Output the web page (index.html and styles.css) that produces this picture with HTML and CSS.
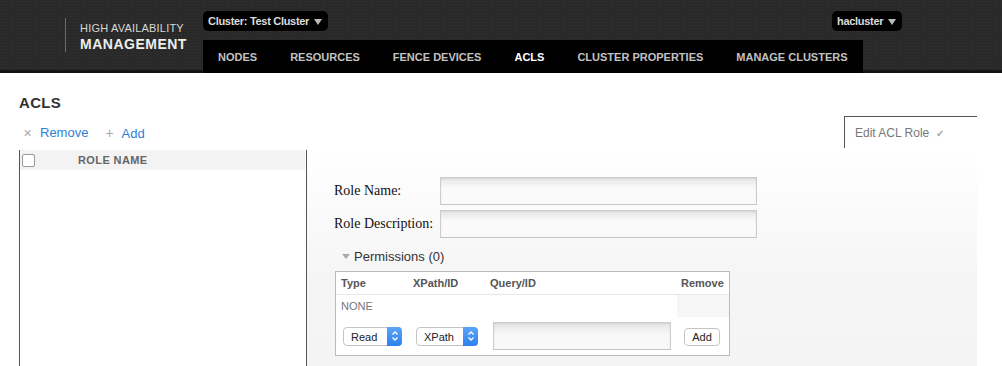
FILE: index.html
```html
<!DOCTYPE html>
<html lang="en">
<head>
    <meta charset="UTF-8">
    <title>High Availability Management - ACLs</title>
    <link rel="stylesheet" href="styles.css">
</head>
<body>
    <!-- top bar -->
    <header class="topbar">
        <div class="logo">
            <div class="logo-small">HIGH AVAILABILITY</div>
            <div class="logo-big">MANAGEMENT</div>
        </div>
        <div class="header-main">
            <div class="header-top">
                <div class="dropdown">Cluster: Test Cluster <span class="caret"></span></div>
                <div class="dropdown user">hacluster <span class="caret"></span></div>
            </div>
            <nav class="nav">
                <a>NODES</a>
                <a>RESOURCES</a>
                <a>FENCE DEVICES</a>
                <a class="active">ACLS</a>
                <a>CLUSTER PROPERTIES</a>
                <a>MANAGE CLUSTERS</a>
            </nav>
        </div>
    </header>

    <div class="page">
        <h1 class="page-title">ACLS</h1>

        <div class="toolbar">
            <div class="actions">
                <a class="action"><span class="action-icon">&#x2715;</span>Remove</a>
                <a class="action"><span class="action-icon plus">+</span>Add</a>
            </div>
            <div class="tab">Edit ACL Role <span class="check">&#x2714;</span></div>
        </div>

        <div class="panels">
            <div class="list-panel">
                <div class="list-head">
                    <span class="checkbox"></span>
                    <span class="list-title">ROLE NAME</span>
                </div>
            </div>

            <div class="edit-panel">
                <div class="form-row">
                    <label class="form-label">Role Name:</label>
                    <div class="text-input wide"></div>
                </div>
                <div class="form-row">
                    <label class="form-label">Role Description:</label>
                    <div class="text-input wide"></div>
                </div>

                <div class="perm-title"><span class="tri"></span>Permissions (0)</div>

                <div class="perm-table">
                    <div class="perm-row perm-head">
                        <div>Type</div>
                        <div>XPath/ID</div>
                        <div>Query/ID</div>
                        <div class="col-remove">Remove</div>
                    </div>
                    <div class="perm-row perm-empty">
                        <div>NONE</div>
                        <div></div>
                        <div></div>
                        <div class="shade"></div>
                    </div>
                    <div class="perm-row perm-new">
                        <div><div class="select sel-read">Read<span class="sel-arrow"><svg width="8" height="12" viewBox="0 0 8 12"><path d="M1.5 4.5 L4 2 L6.5 4.5 M1.5 7.5 L4 10 L6.5 7.5" fill="none" stroke="#fff" stroke-width="1.3"/></svg></span></div></div>
                        <div><div class="select sel-xpath">XPath<span class="sel-arrow"><svg width="8" height="12" viewBox="0 0 8 12"><path d="M1.5 4.5 L4 2 L6.5 4.5 M1.5 7.5 L4 10 L6.5 7.5" fill="none" stroke="#fff" stroke-width="1.3"/></svg></span></div></div>
                        <div><div class="text-input query"></div></div>
                        <div><button class="btn-add">Add</button></div>
                    </div>
                </div>
            </div>
        </div>
    </div>
</body>
</html>
```

FILE: styles.css
```css
body {
    margin: 0;
    font-family: "Liberation Sans", Arial, sans-serif;
    background: #fff;
    color: #333;
}

/* header */
.topbar {
    height: 73px;
    display: flex;
    background-color: #292929;
    background-image:
        linear-gradient(to bottom, transparent 70px, #141414 70px),
        radial-gradient(#333 0.8px, transparent 1px);
    background-size: 100% 100%, 3px 3px;
}
.logo {
    margin: 18px 0 0 65px;
    height: 34px;
    width: 138px;
    box-sizing: border-box;
    border-left: 1px solid #6a6a6a;
    padding-left: 14px;
}
.logo-small {
    font-size: 11px;
    color: #d8d8d8;
    letter-spacing: 0.2px;
    line-height: 12px;
    margin-top: 4px;
}
.logo-big {
    font-size: 14px;
    font-weight: bold;
    color: #eee;
    letter-spacing: 0.5px;
    line-height: 16px;
    margin-top: 2px;
}
.header-main {
    flex: 1;
    display: flex;
    flex-direction: column;
}
.header-top {
    display: flex;
    justify-content: space-between;
    padding: 11px 100px 0 0;
    height: 29px;
    box-sizing: border-box;
}
.dropdown {
    background: #000;
    border-radius: 5px;
    height: 20px;
    line-height: 20px;
    padding: 0 6px 0 5px;
    font-size: 11px;
    font-weight: bold;
    color: #dcdcdc;
    letter-spacing: -0.3px;
}
.caret {
    display: inline-block;
    width: 0;
    height: 0;
    border-left: 4px solid transparent;
    border-right: 4px solid transparent;
    border-top: 6px solid #bbb;
    margin-left: 2px;
    vertical-align: 0;
}
.nav {
    width: 660px;
    height: 33px;
    margin-top: 11px;
    background: #000;
    display: flex;
    align-items: center;
    gap: 33px;
    padding-left: 15px;
    box-sizing: border-box;
}
.nav a {
    font-size: 11px;
    font-weight: bold;
    color: #c2c2c2;
}
.nav a.active {
    color: #fff;
}

/* page */
.page {
    padding: 0 0 0 19px;
}
.page-title {
    margin: 0;
    padding-top: 21px;
    font-size: 15px;
    line-height: 18px;
    color: #333;
    letter-spacing: 0.3px;
}
.toolbar {
    display: flex;
    justify-content: space-between;
    align-items: flex-end;
    padding-right: 25px;
    height: 36px;
}
.actions {
    display: flex;
    gap: 17px;
    padding: 0 0 7px 4px;
}
.action {
    font-size: 13px;
    color: #2f7ed8;
}
.action-icon {
    color: #aaa;
    font-size: 11px;
    margin-right: 8px;
}
.action-icon.plus {
    font-size: 14px;
}
.tab {
    width: 133px;
    height: 32px;
    box-sizing: border-box;
    border-top: 1px solid #555;
    border-left: 1px solid #555;
    padding: 9px 0 0 10px;
    font-size: 12px;
    color: #777;
}
.check {
    color: #aaa;
    font-size: 10px;
    margin-left: 3px;
}

.panels {
    display: flex;
    margin-top: 2px;
    height: 220px;
}
.list-panel {
    width: 288px;
    border-left: 1px solid #555;
    border-right: 1px solid #555;
    box-sizing: border-box;
    padding-right: 1px;
}
.list-head {
    background: #f3f3f3;
    height: 20px;
    display: flex;
    align-items: center;
}
.checkbox {
    width: 11px;
    height: 11px;
    border: 1px solid #999;
    border-radius: 2px;
    background: #fff;
    margin-left: 2px;
}
.list-title {
    margin-left: 43px;
    font-size: 11px;
    font-weight: bold;
    color: #666;
    letter-spacing: 0.4px;
}

.edit-panel {
    width: 670px;
    background: linear-gradient(#fff, #f5f5f5 60%, #f4f4f4);
    padding: 27px 0 0 27px;
    box-sizing: border-box;
}
.form-row {
    display: flex;
    align-items: center;
    margin-bottom: 5px;
}
.form-label {
    width: 106px;
    font-family: "Liberation Serif", "Times New Roman", serif;
    font-size: 14px;
    color: #111;
}
.text-input {
    box-sizing: border-box;
    border: 1px solid #ccc;
    border-bottom-color: #c4c4c4;
    background: linear-gradient(#e6e6e6, #fafafa 40%, #fafafa);
    box-shadow: inset 0 1px 2px rgba(0, 0, 0, 0.08);
}
.text-input.wide {
    width: 317px;
    height: 28px;
}
.perm-title {
    margin: 11px 0 0 8px;
    font-size: 13px;
    color: #333;
    display: flex;
    align-items: center;
}
.tri {
    width: 0;
    height: 0;
    border-left: 4px solid transparent;
    border-right: 4px solid transparent;
    border-top: 5px solid #aaa;
    margin-right: 4px;
}
.perm-table {
    width: 395px;
    margin: 7px 0 0 1px;
    border: 1px solid #bbb;
    background: #fff;
    box-sizing: border-box;
}
.perm-row {
    display: grid;
    grid-template-columns: 72px 77px 192px 1fr;
}
.perm-head {
    height: 22px;
    align-items: center;
    font-size: 11px;
    font-weight: bold;
    color: #555;
    border-bottom: 1px solid #e8e8e8;
}
.perm-head div {
    padding-left: 5px;
}
.perm-head .col-remove {
    padding-left: 4px;
}
.perm-empty {
    height: 22px;
    font-size: 11px;
    color: #777;
}
.perm-empty div {
    padding-left: 5px;
    line-height: 22px;
}
.perm-empty .shade {
    background: #f6f6f6;
}
.perm-new {
    height: 38px;
    align-items: center;
}
.select {
    position: relative;
    height: 19px;
    line-height: 18px;
    box-sizing: border-box;
    border: 1px solid #c4c4c4;
    border-radius: 4px;
    background: #fff;
    font-size: 11px;
    color: #222;
    padding-left: 7px;
}
.sel-read {
    width: 59px;
    margin-left: 7px;
}
.sel-xpath {
    width: 62px;
    margin-left: 8px;
}
.sel-arrow {
    position: absolute;
    right: -1px;
    top: -1px;
    width: 15px;
    height: 19px;
    border-radius: 0 4px 4px 0;
    background: linear-gradient(#5ba5f8, #2e7ff0);
    display: flex;
    align-items: center;
    justify-content: center;
}
.text-input.query {
    width: 178px;
    height: 28px;
    margin-left: 8px;
    background: linear-gradient(#e4e4e4, #f8f8f8 45%, #f8f8f8);
}
.btn-add {
    margin-left: 7px;
    width: 36px;
    height: 18px;
    padding: 0;
    border: 1px solid #c4c4c4;
    border-radius: 4px;
    background: #fff;
    font-family: "Liberation Sans", Arial, sans-serif;
    font-size: 11px;
    color: #222;
}
```
